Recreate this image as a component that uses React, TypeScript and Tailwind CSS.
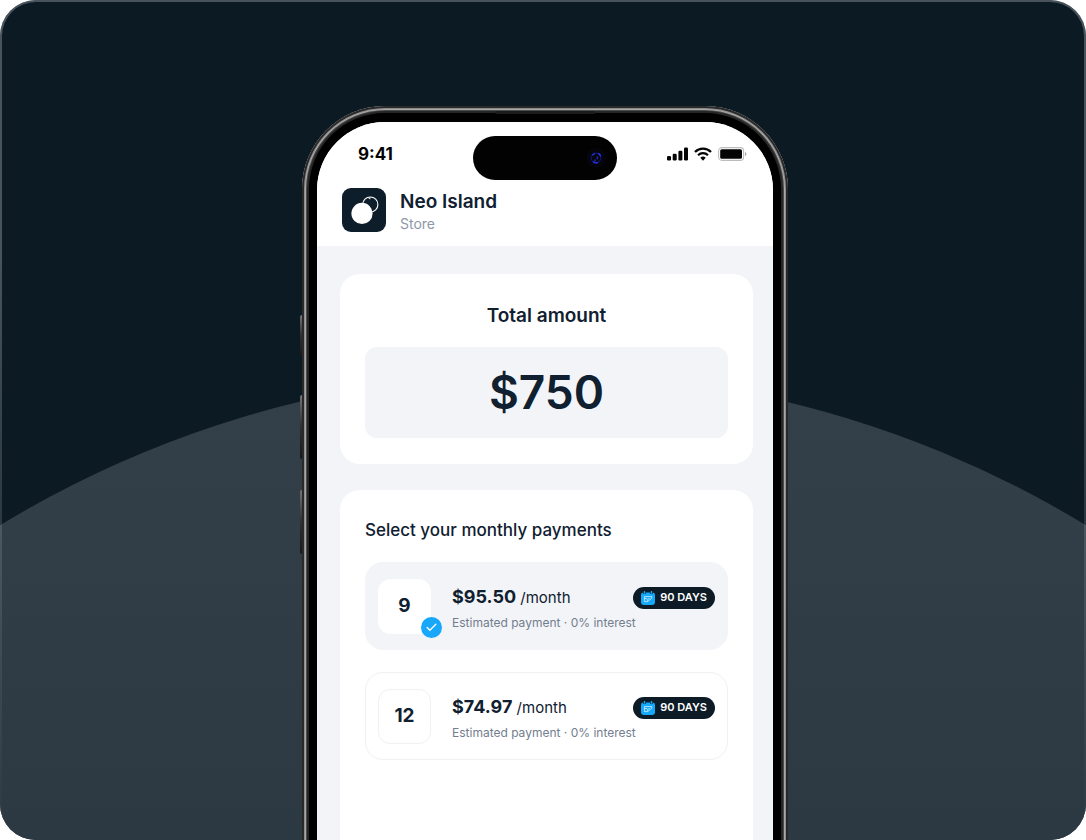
import React, { useState } from "react";
import { Check } from "lucide-react";
import clsx from "clsx";

const plans = [
  { months: 9, price: "$95.50", term: "90 DAYS" },
  { months: 12, price: "$74.97", term: "90 DAYS" },
];

function CalendarIcon() {
  return (
    <svg width="14" height="14" viewBox="0 0 14 14" fill="none" aria-hidden="true">
      <rect x="0" y="1.6" width="14" height="12.4" rx="2.4" fill="#14a9fb" />
      <path d="M3.5 0v3M10.5 0v3" stroke="#0d1b26" strokeWidth="2.4" />
      <path d="M3.5 0v2.8M10.5 0v2.8" stroke="#14a9fb" strokeWidth="1.3" />
      <path
        d="M3.4 5.6h7.4v1.6L6.6 10.6H3.4zM3.4 7.6h2.8M6.6 10.4V8.4l2-1"
        stroke="#d5f0ff"
        strokeWidth="0.8"
      />
    </svg>
  );
}

function StoreLogo() {
  return (
    <svg width="44" height="44" viewBox="0 0 44 44" fill="none" aria-hidden="true">
      <rect width="44" height="44" rx="9" fill="#0d1d2a" />
      <circle cx="28.3" cy="16.6" r="7.6" stroke="#fff" strokeWidth="1.1" />
      <circle cx="20" cy="25.4" r="10.6" fill="#fff" />
      <path d="M28 9v2.2M26.2 9.8l1.8 1" stroke="#fff" strokeWidth="0.7" />
    </svg>
  );
}

function SignalIcon() {
  return (
    <svg width="21" height="14" viewBox="0 0 21 14" fill="#050505" aria-hidden="true">
      <rect x="0" y="9" width="4" height="4.5" rx="1.2" />
      <rect x="5.7" y="6.8" width="4" height="6.7" rx="1.2" />
      <rect x="11.4" y="3.8" width="4" height="9.7" rx="1.2" />
      <rect x="17" y="0.5" width="4" height="13" rx="1.2" />
    </svg>
  );
}

function WifiIcon() {
  return (
    <svg width="18" height="14" viewBox="0 0 18 14" fill="none" aria-hidden="true">
      <path d="M1 5a11.4 11.4 0 0 1 16 0" stroke="#050505" strokeWidth="2.3" />
      <path d="M4 8.2a7.1 7.1 0 0 1 10 0" stroke="#050505" strokeWidth="2.1" />
      <path d="M6.3 10.8a4 4 0 0 1 5.4 0L9 13.7z" fill="#050505" />
    </svg>
  );
}

function BatteryIcon() {
  return (
    <svg width="29" height="14" viewBox="0 0 29 14" fill="none" aria-hidden="true">
      <rect x="0.6" y="0.6" width="25" height="12.8" rx="3.4" stroke="#bcbcbc" strokeWidth="1.1" />
      <rect x="2.2" y="2.2" width="21.8" height="9.6" rx="1.6" fill="#050505" />
      <path d="M27 5v4a2.1 2.1 0 0 0 0-4z" fill="#a8a8a8" />
    </svg>
  );
}

function CameraLens() {
  return (
    <svg width="24" height="24" viewBox="0 0 24 24" fill="none" aria-hidden="true">
      <circle cx="12" cy="12" r="10" fill="#05050c" />
      <circle cx="12" cy="12" r="4.8" stroke="#10106e" strokeWidth="1.2" />
      <path
        d="M8.2 9.5a5 5 0 0 1 2.8-2.2M14 7.3c2 .6 2.6 1.6 2.3 3.2M9.2 15.5c1 1.4 3.2 1.8 4.8.8"
        stroke="#2436e8"
        strokeWidth="1.4"
      />
      <path d="M13.4 10.6v2.6M11 13.4v2" stroke="#242cc0" strokeWidth="1.4" />
    </svg>
  );
}

function StatusBar() {
  return (
    <div className="grid h-[66px] grid-cols-[1fr_144px_1fr] items-start pt-[14px]">
      <span className="pl-[41px] text-[17px] leading-9 font-bold text-black">9:41</span>
      <div className="flex h-[44px] items-center justify-end rounded-full bg-[#020202] pr-[9px]">
        <CameraLens />
      </div>
      <div className="flex h-9 items-center justify-end gap-[6px] pr-[26px]">
        <SignalIcon />
        <WifiIcon />
        <BatteryIcon />
      </div>
    </div>
  );
}

function Plan({
  plan,
  selected,
  onSelect,
}: {
  plan: (typeof plans)[number];
  selected: boolean;
  onSelect: () => void;
}) {
  return (
    <label
      className={clsx(
        "flex h-[88px] cursor-pointer items-center rounded-[18px] border px-3",
        selected ? "border-[#f2f4f7] bg-[#f2f4f7]" : "border-[#eff1f3] bg-white"
      )}
    >
      <input
        type="radio"
        name="plan"
        className="sr-only"
        checked={selected}
        onChange={onSelect}
      />
      <span
        className={clsx(
          "relative flex h-[55px] w-[53px] shrink-0 items-center justify-center rounded-xl border bg-white text-[19px] font-bold",
          selected ? "border-white" : "border-[#eff1f3]"
        )}
      >
        {plan.months}
        {selected && (
          <span className="absolute -right-3 -bottom-[5px] flex size-[21px] items-center justify-center rounded-full bg-[#18a8fb] text-white">
            <Check size={13} strokeWidth={2.5} />
          </span>
        )}
      </span>
      <span className="flex flex-1 flex-col gap-[3px] pt-[6px] pl-[21px]">
        <span className="flex items-center justify-between">
          <span className="text-[15px] leading-6">
            <span className="text-lg leading-6 font-bold">{plan.price}</span> /month
          </span>
          <span className="flex h-[22px] items-center gap-[5px] rounded-full bg-[#0d1b26] px-2 text-[11px] font-semibold whitespace-nowrap text-white">
            <CalendarIcon />
            {plan.term}
          </span>
        </span>
        <span className="text-xs leading-5 text-[#727e8f]">
          Estimated payment · 0% interest
        </span>
      </span>
    </label>
  );
}

export default function App() {
  const [months, setMonths] = useState(9);

  return (
    <main className="relative flex min-h-screen flex-col items-center overflow-hidden rounded-[36px] bg-[#0c1a24] pt-[106px] pl-1 font-['Inter',sans-serif] text-[#102030]">
      <div className="absolute top-[373px] left-1/2 size-[2088px] -translate-x-1/2 rounded-full bg-linear-to-b from-[#344049] to-[#10222f]" />

      <div className="relative -mb-8 flex w-full max-w-[486px] flex-1 flex-col rounded-t-[83px] bg-black px-[15px] pt-4 shadow-[inset_0_0_0_2px_#292929,inset_0_0_0_3px_#8c8c8c,inset_0_0_0_4px_#a8a8a8,inset_0_0_0_5px_#4c4c4c,inset_0_0_0_7px_#262626]">
        <span className="absolute top-[209px] -left-[2px] h-[42px] w-[2px] rounded-l-sm bg-linear-to-b from-[#777] via-[#303030] to-[#181818]" />
        <span className="absolute top-[289px] -left-[2px] h-[64px] w-[2px] rounded-l-sm bg-linear-to-b from-[#777] via-[#303030] to-[#181818]" />
        <span className="absolute top-[384px] -left-[2px] h-[64px] w-[2px] rounded-l-sm bg-linear-to-b from-[#777] via-[#303030] to-[#181818]" />
        <span className="absolute top-[5px] left-1/2 h-[3px] w-[100px] -translate-x-1/2 rounded-full bg-[#1c1c1c]" />

        <div className="flex flex-1 flex-col overflow-hidden rounded-t-[68px] bg-[#f2f4f8]">
          <header className="bg-white pb-[14px]">
            <StatusBar />
            <div className="flex h-[44px] items-center gap-[14px] pl-[25px]">
              <StoreLogo />
              <div className="pt-1">
                <h1 className="text-[19px] leading-6 font-semibold">Neo Island</h1>
                <p className="text-sm leading-5 text-[#8e98a8]">Store</p>
              </div>
            </div>
          </header>

          <div className="flex flex-1 flex-col gap-[26px] pt-7 pr-5 pl-[23px]">
            <section className="rounded-[20px] bg-white px-[25px] pt-7 pb-[26px]">
              <h2 className="text-center text-[19px] leading-7 font-semibold">Total amount</h2>
              <p className="mt-[17px] rounded-xl bg-[#f2f4f7] py-[15px] text-center text-[46px] leading-[61px] font-semibold">
                $750
              </p>
            </section>

            <section className="flex-1 rounded-t-[20px] bg-white px-[25px] pt-7">
              <h2 className="text-[17px] leading-6 font-medium">Select your monthly payments</h2>
              <div className="mt-5 flex flex-col gap-[22px]">
                {plans.map((plan) => (
                  <Plan
                    key={plan.months}
                    plan={plan}
                    selected={plan.months === months}
                    onSelect={() => setMonths(plan.months)}
                  />
                ))}
              </div>
            </section>
          </div>
        </div>
      </div>

      <div className="pointer-events-none absolute inset-0 rounded-[36px] border-2 border-b-0 border-white/25 mask-b-from-30%" />
    </main>
  );
}
